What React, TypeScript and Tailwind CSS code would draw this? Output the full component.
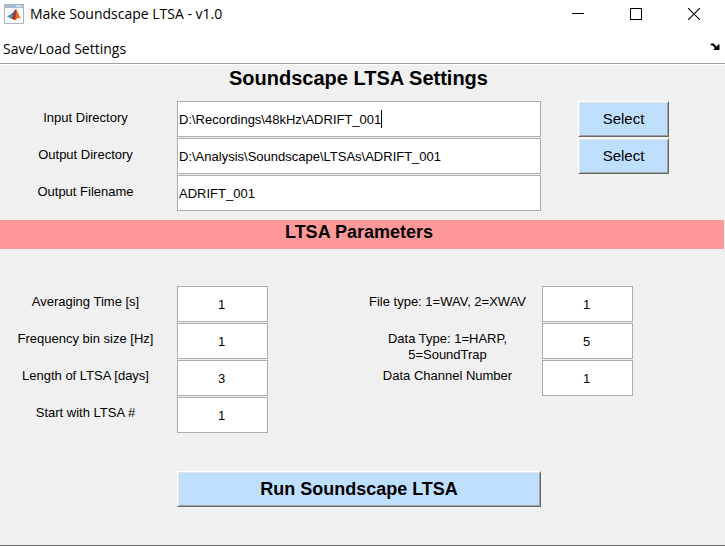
import { useState } from "react";

const labelClass = "pr-1.5 text-center text-[13px] leading-4";
const fieldClass =
  "block h-9 w-full min-w-0 rounded-none border border-[#abadb3] bg-white text-[13px] leading-4 text-black outline-none";
const buttonClass =
  "h-9 w-full border border-t-white border-l-white border-r-[#696969] border-b-[#696969] bg-[#bfdfff] shadow-[inset_1px_1px_0_#e3e3e3,inset_-1px_-1px_0_#a0a0a0]";

function TitleBar() {
  return (
    <header className="flex h-8 items-start justify-between font-['Open_Sans','Noto_Sans',sans-serif]">
      <div className="flex items-center gap-1.5 pt-1 pl-1">
        <svg width="20" height="20" viewBox="0 0 20 20" aria-hidden="true">
          <rect x="0.5" y="0.5" width="19" height="19" fill="#f8f9fb" stroke="#a9b6c3" />
          <rect x="1" y="1" width="18" height="3" fill="#a7bacd" />
          <rect x="12" y="1.5" width="6" height="1.5" fill="#dae5ee" />
          <path d="M3 12.2 7 10.3 9.4 12.3 7 14.7 5.8 13.9Z" fill="#4d91bb" />
          <path d="M7 10.3C9 9.8 10 6.4 12 5L9.4 12.3Z" fill="#244f7c" />
          <path d="M12 5C13.4 6 14.6 11.4 17 15 15 13.5 13.7 13.6 12 15.6 10.4 17.4 9.7 14.1 7 14.7 10 13.2 10.5 8 12 5Z" fill="#e56a1e" />
          <path d="M12 5C12.2 8 11.8 12.6 11 15.8 10 16 9 14.3 7 14.7 10 13.2 10.5 8 12 5Z" fill="#a72f20" />
        </svg>
        <h1 className="text-[14px] leading-5">Make Soundscape LTSA - v1.0</h1>
      </div>
      <div className="flex gap-3">
        <button type="button" aria-label="Minimize" className="flex h-7 w-[46px] items-center justify-center">
          <svg width="12" height="12" viewBox="0 0 12 12" shapeRendering="crispEdges">
            <path d="M0 5.5H12" stroke="black" />
          </svg>
        </button>
        <button type="button" aria-label="Maximize" className="flex h-7 w-[46px] items-center justify-center">
          <svg width="12" height="12" viewBox="0 0 12 12" shapeRendering="crispEdges">
            <rect x="0.5" y="0.5" width="11" height="11" fill="none" stroke="black" />
          </svg>
        </button>
        <button type="button" aria-label="Close" className="mr-2 flex h-7 w-[46px] items-center justify-center">
          <svg width="12" height="12" viewBox="0 0 12 12">
            <path d="M0 0 12 12M12 0 0 12" stroke="black" strokeWidth="1.1" />
          </svg>
        </button>
      </div>
    </header>
  );
}

function MenuBar() {
  return (
    <nav className="flex h-8 items-center justify-between border-b border-[#a0a0a0] pt-0.5 pr-[5px] pl-[3px]">
      <button type="button" className="font-['Open_Sans','Noto_Sans',sans-serif] text-[14px] leading-5">
        Save/Load Settings
      </button>
      <button type="button" aria-label="Dock window" className="pb-1">
        <svg width="10" height="8" viewBox="0 0 10 8">
          <path d="M0 1.5H1V.5H4V1.5H5V2.5H6V3.5H7V2.5H8V1.5H9.5V7H3.5V6H4.5V5H5V4.5H4V3.5H3V2.5H1.5V2H0Z" fill="black" />
        </svg>
      </button>
    </nav>
  );
}

type PathRowProps = { id: string; label: string; initial: string; caret?: boolean; select?: boolean };

function PathRow({ id, label, initial, caret, select }: PathRowProps) {
  const [value, setValue] = useState(initial);
  return (
    <div className="grid grid-cols-[177fr_364fr_37fr_91fr_56fr]">
      <label htmlFor={id} className={`${labelClass} pt-[9px]`}>{label}</label>
      <div className="relative">
        <input id={id} type="text" value={value} onChange={(e) => setValue(e.target.value)} className={`${fieldClass} px-px`} />
        {caret && <span className="pointer-events-none absolute top-[9px] left-[204px] h-[18px] w-px bg-black" />}
      </div>
      <div />
      {select && (
        <button type="button" aria-label={`Select ${label}`} className={`${buttonClass} text-[15px] leading-5`}>
          Select
        </button>
      )}
    </div>
  );
}

type Param = { id: string; label: string; initial: string };

const leftParams: Param[] = [
  { id: "averaging", label: "Averaging Time [s]", initial: "1" },
  { id: "bin-size", label: "Frequency bin size [Hz]", initial: "1" },
  { id: "length", label: "Length of LTSA [days]", initial: "3" },
  { id: "start", label: "Start with LTSA #", initial: "1" },
];

const rightParams: Param[] = [
  { id: "file-type", label: "File type: 1=WAV, 2=XWAV", initial: "1" },
  { id: "data-type", label: "Data Type: 1=HARP, 5=SoundTrap", initial: "5" },
  { id: "channel", label: "Data Channel Number", initial: "1" },
];

function ParamRow({ id, label, initial }: Param) {
  const [value, setValue] = useState(initial);
  return (
    <>
      <label htmlFor={id} className={`${labelClass} h-9 pt-2`}>{label}</label>
      <input id={id} type="text" value={value} onChange={(e) => setValue(e.target.value)} className={`${fieldClass} pr-0.5 text-center`} />
    </>
  );
}

export default function App() {
  return (
    <div className="flex min-h-screen flex-col bg-white font-['Liberation_Sans',Arial,sans-serif] text-black">
      <TitleBar />
      <MenuBar />
      <main className="mt-px flex-1 border-b border-[#696969] bg-[#f0f0f0]">
        <h2 className="pr-2 text-center text-[20px] leading-[26px] font-bold">Soundscape LTSA Settings</h2>
        <div className="mt-2.5 flex flex-col gap-px">
          <PathRow id="input-dir" label="Input Directory" initial="D:\Recordings\48kHz\ADRIFT_001" caret select />
          <PathRow id="output-dir" label="Output Directory" initial="D:\Analysis\Soundscape\LTSAs\ADRIFT_001" select />
          <PathRow id="output-name" label="Output Filename" initial="ADRIFT_001" />
        </div>
        <h2 className="mt-[9px] mr-px h-[29px] bg-[#ff9999] pr-1.5 text-center text-[18px] leading-6 font-bold">
          LTSA Parameters
        </h2>
        <div className="mt-[37px] grid grid-cols-[268fr_91fr_274fr_92fr] items-start">
          <div className="grid grid-cols-[177fr_91fr] gap-y-px">
            {leftParams.map((p) => <ParamRow key={p.id} {...p} />)}
          </div>
          <div />
          <div className="grid grid-cols-[183fr_91fr] gap-y-px">
            {rightParams.map((p) => <ParamRow key={p.id} {...p} />)}
          </div>
        </div>
        <div className="mt-[38px] grid grid-cols-[177fr_364fr_184fr]">
          <button type="button" className={`${buttonClass} col-start-2 text-[18px] leading-6 font-bold`}>
            Run Soundscape LTSA
          </button>
        </div>
      </main>
    </div>
  );
}
